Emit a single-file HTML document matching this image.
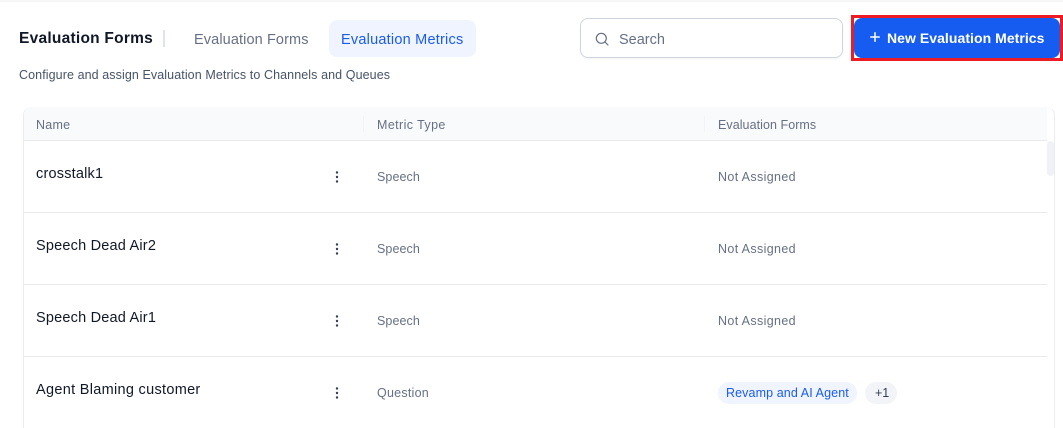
<!DOCTYPE html>
<html><head><meta charset="utf-8">
<style>
html,body{margin:0;padding:0;background:#fff;width:1063px;height:428px;overflow:hidden}
body{position:relative;font-family:"Liberation Sans",sans-serif}
.t{position:absolute;white-space:nowrap;line-height:16px}
.b{position:absolute}
.name{font-size:14.5px;color:#101828;left:36px;letter-spacing:.2px}
.type{font-size:12.5px;color:#667085;left:377px;letter-spacing:.08px}
.form{font-size:12.5px;color:#667085;left:718px;letter-spacing:.36px}
.hd{font-size:12.5px;color:#667085;top:117px}
.line{position:absolute;left:24px;width:1023px;height:1px;background:#e9eaee}
</style></head><body>
<div class="b" style="left:0;top:0;width:1063px;height:2px;background:#f6f6f7"></div>

<div class="t" style="left:19px;top:31px;font-size:15.5px;font-weight:bold;color:#101828;letter-spacing:.25px">Evaluation Forms</div>
<div class="b" style="left:163px;top:30px;width:1.5px;height:17px;background:#dfe3ea"></div>
<div class="t" style="left:194px;top:32px;font-size:14.5px;color:#667085;letter-spacing:.11px">Evaluation Forms</div>
<div class="b" style="left:329px;top:20px;width:147px;height:37px;border-radius:8px;background:#eff4ff"></div>
<div class="t" style="left:341px;top:32px;font-size:14.5px;color:#1a5cf0;letter-spacing:.22px">Evaluation Metrics</div>
<div class="t" style="left:19px;top:67px;font-size:12.5px;color:#475467;letter-spacing:.09px">Configure and assign Evaluation Metrics to Channels and Queues</div>

<div class="b" style="left:580px;top:18px;width:261px;height:38px;border:1px solid #d0d5dd;border-radius:8px;background:#fff;box-shadow:0 1px 2px rgba(16,24,40,.05)"></div>
<svg class="b" style="left:595px;top:31.5px" width="14" height="14" viewBox="0 0 14 14" fill="none" stroke="#667085" stroke-width="1.2" stroke-linecap="round"><circle cx="6.3" cy="6.3" r="5"/><path d="M10 10l3 3"/></svg>
<div class="t" style="left:619px;top:32px;font-size:14.5px;color:#667085">Search</div>

<div class="b" style="left:851px;top:15px;width:212px;height:46px;background:#ed1c24"></div>
<div class="b" style="left:853.5px;top:17.7px;width:206px;height:40.5px;background:#fff"></div>
<div class="b" style="left:853.5px;top:17.7px;width:206px;height:40.5px;border-radius:8px;background:#175cf0"></div>
<svg class="b" style="left:870px;top:32px" width="10" height="10" viewBox="0 0 10 10" stroke="#fff" stroke-width="1.5" stroke-linecap="round"><path d="M5 .8v8.4M.8 5h8.4"/></svg>
<div class="t" style="left:887px;top:30px;font-size:14px;font-weight:bold;color:#fff;letter-spacing:.05px">New Evaluation Metrics</div>

<div class="b" style="left:23px;top:107px;width:1030px;height:340px;border-radius:8px;background:#fff;border:1px solid #ececee;border-top-color:#f8f8f9"></div>
<div class="b" style="left:24px;top:107px;width:1023px;height:33px;border-radius:8px 0 0 0;background:#f9fafb"></div>
<div class="line" style="top:140px"></div>
<div class="b" style="left:363px;top:116px;width:1px;height:16px;background:#f2f3f5"></div>
<div class="b" style="left:704px;top:116px;width:1px;height:16px;background:#f2f3f5"></div>
<div class="b" style="left:1047px;top:141px;width:7px;height:35px;border-radius:4px;background:#f0f1f5"></div>

<div class="t hd" style="left:36px;letter-spacing:.25px">Name</div>
<div class="t hd" style="left:377px;letter-spacing:.4px">Metric Type</div>
<div class="t hd" style="left:718px;letter-spacing:.06px">Evaluation Forms</div>

<div class="t name" style="top:166px">crosstalk1</div>
<div class="t type" style="top:169px">Speech</div>
<div class="t form" style="top:169px">Not Assigned</div>
<div class="line" style="top:212px"></div>

<div class="t name" style="top:238px">Speech Dead Air2</div>
<div class="t type" style="top:241px">Speech</div>
<div class="t form" style="top:241px">Not Assigned</div>
<div class="line" style="top:284px"></div>

<div class="t name" style="top:310px">Speech Dead Air1</div>
<div class="t type" style="top:313px">Speech</div>
<div class="t form" style="top:313px">Not Assigned</div>
<div class="line" style="top:356px"></div>

<div class="t name" style="top:382px;letter-spacing:.3px">Agent Blaming customer</div>
<div class="t type" style="top:385px;letter-spacing:.24px">Question</div>

<svg class="b" style="left:334px;top:170px" width="6" height="230" viewBox="0 0 6 230" fill="#344054">
<circle cx="3" cy="2.5" r="1.2"/><circle cx="3" cy="7" r="1.2"/><circle cx="3" cy="11.5" r="1.2"/>
<circle cx="3" cy="74.5" r="1.2"/><circle cx="3" cy="79" r="1.2"/><circle cx="3" cy="83.5" r="1.2"/>
<circle cx="3" cy="146.5" r="1.2"/><circle cx="3" cy="151" r="1.2"/><circle cx="3" cy="155.5" r="1.2"/>
<circle cx="3" cy="218.5" r="1.2"/><circle cx="3" cy="223" r="1.2"/><circle cx="3" cy="227.5" r="1.2"/>
</svg>

<div class="b" style="left:718px;top:382px;width:139px;height:22px;border-radius:11px;background:#eff4ff"></div>
<div class="t" style="left:726px;top:385px;font-size:12.5px;color:#1a5cf0;letter-spacing:.1px">Revamp and AI Agent</div>
<div class="b" style="left:865px;top:382px;width:32px;height:22px;border-radius:11px;background:#f2f4f7"></div>
<div class="t" style="left:875px;top:385px;font-size:12.5px;color:#344054">+1</div>
</body></html>
